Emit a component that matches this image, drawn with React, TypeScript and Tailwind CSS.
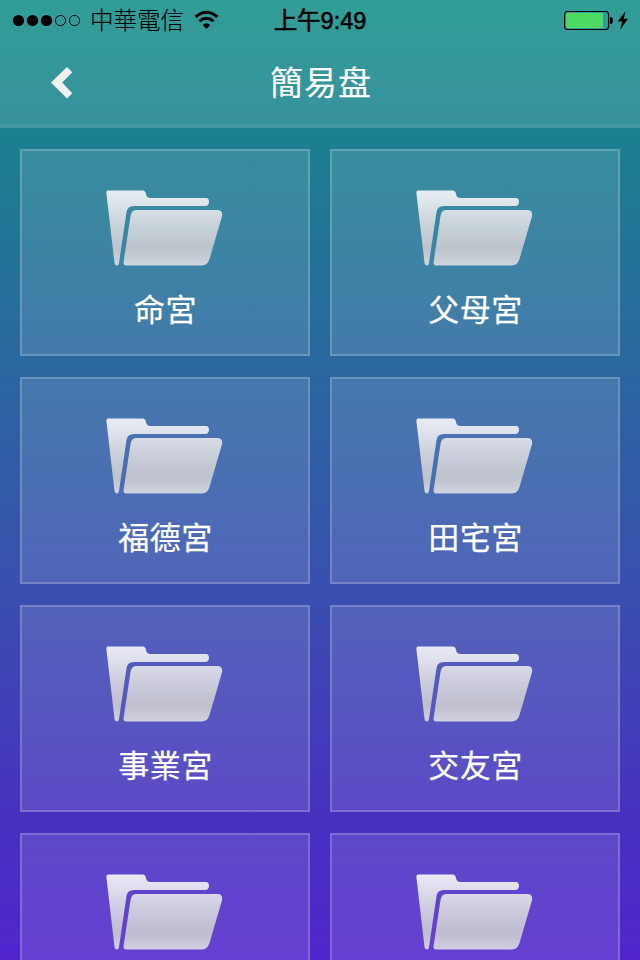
type Palace = {
    id: number;
    name?: string;
};

const palaces: Palace[] = [
    { id: 1, name: '命宮' },
    { id: 2, name: '父母宮' },
    { id: 3, name: '福德宮' },
    { id: 4, name: '田宅宮' },
    { id: 5, name: '事業宮' },
    { id: 6, name: '交友宮' },
    { id: 7 },
    { id: 8 },
];

export default function App() {
    return (
        <div className="flex h-[960px] w-[640px] flex-col overflow-hidden bg-[linear-gradient(180deg,#118f87_0px,#1b808f_130px,#2a67a0_365px,#3a4eb0_600px,#4730bf_820px,#5025cc_960px)] font-['Liberation_Sans','Noto_Sans_CJK_TC',sans-serif]">
            <header className="h-32 shrink-0 border-b-4 border-white/6 bg-white/13">
                <StatusBar />
                <NavBar title="簡易盘" />
            </header>

            <main className="grid grid-cols-2 gap-x-5 gap-y-[21px] px-5 pt-[21px]">
                {palaces.map((palace) => (
                    <PalaceCard key={palace.id} palace={palace} />
                ))}
            </main>
        </div>
    );
}

function StatusBar() {
    return (
        <div className="grid h-10 grid-cols-[1fr_auto_1fr] items-center text-black">
            <div className="flex items-center pl-3">
                <svg width="70" height="14" viewBox="0 0 70 14">
                    <circle cx="6.5" cy="7.5" r="5.6" />
                    <circle cx="20.5" cy="7.5" r="5.6" />
                    <circle cx="34.5" cy="7.5" r="5.6" />
                    <circle cx="48.5" cy="7.5" r="5.1" fill="none" stroke="#000" />
                    <circle cx="62.5" cy="7.5" r="5.1" fill="none" stroke="#000" />
                </svg>
                <span className="ml-[8px] pt-[2px] text-[23.5px] leading-[38px] font-light [-webkit-text-stroke:0.15px_black]">
                    中華電信
                </span>
                <svg className="ml-[10px]" width="26" height="20" viewBox="0 0 26 20">
                    <path d="M1.5 7Q12.5 -2.5 23.5 7" fill="none" stroke="#000" strokeWidth="3" />
                    <path d="M5.4 11.2Q12.5 5.2 19.6 11.2" fill="none" stroke="#000" strokeWidth="2.8" />
                    <path d="M8.7 14.9Q12.5 11.7 16.3 14.9L12.5 19Z" />
                </svg>
            </div>

            <span className="pt-[2px] text-[23.5px] leading-[38px] [-webkit-text-stroke:0.6px_black]">
                上午9:49
            </span>

            <div className="flex items-center justify-end pr-[10px]">
                <svg width="66" height="22" viewBox="0 0 66 22">
                    <rect x="0.6" y="2.5" width="44" height="18" rx="3" fill="none" stroke="#000" strokeWidth="1.2" />
                    <rect x="2" y="4" width="37" height="15" rx="1" fill="#4cd964" />
                    <path d="M46 8H47.2Q49 9 49 11.5T47.2 15H46Z" />
                    <path d="M61.5 2L53.7 12.5H58.2L56 21L64 9.7H59.8Z" />
                </svg>
            </div>
        </div>
    );
}

function NavBar({ title }: { title: string }) {
    return (
        <div className="grid h-[84px] grid-cols-[1fr_auto_1fr] items-center">
            <button type="button" className="ml-[50px] w-6">
                <svg width="24" height="34" viewBox="0 0 24 34">
                    <path d="M17 2L22.3 7.2L12.2 17.6L22.3 28.2L17 33.4L1 17.6Z" fill="#f0f0f0" />
                </svg>
            </button>
            <h1 className="pt-[3px] pl-[2px] text-[33px] leading-[81px] tracking-[1px] text-white [-webkit-text-stroke:0.15px_white]">
                {title}
            </h1>
        </div>
    );
}

function PalaceCard({ palace }: { palace: Palace }) {
    return (
        <div className="flex h-[207px] flex-col items-center border-2 border-white/20 bg-white/12 pt-[38px]">
            <FolderIcon />
            {palace.name && (
                <span className="mt-6 pl-[1px] text-[31px] leading-10 tracking-[0.5px] text-white [-webkit-text-stroke:0.25px_white]">
                    {palace.name}
                </span>
            )}
        </div>
    );
}

function FolderIcon() {
    return (
        <svg className="mr-[2px] shrink-0" width="118" height="78" viewBox="0 0 118 78">
            <defs>
                <linearGradient id="folder" gradientUnits="userSpaceOnUse" x1="0" y1="0" x2="0" y2="77">
                    <stop offset="0" stopColor="#f8f8fc" stopOpacity=".92" />
                    <stop offset=".25" stopColor="#ececf0" stopOpacity=".89" />
                    <stop offset=".5" stopColor="#dcdce0" stopOpacity=".87" />
                    <stop offset=".78" stopColor="#cdcdd0" stopOpacity=".88" />
                    <stop offset="1" stopColor="#e2e2e4" stopOpacity=".88" />
                </linearGradient>
            </defs>
            <g fill="url(#folder)">
                <path d="M3 1.5H37.5Q40.5 1.5 41 5Q41.5 9 45.5 9H101Q104 9.3 104 12.7T101 17H29Q22.3 17 21.5 23L14 74Q13.5 76.5 12 76.5Q10 76.5 9.5 74L1.5 5Q1 1.5 3 1.5Z" />
                <path d="M31 21H112Q118.5 21 116.8 28L104.5 70Q102.5 76.5 97 76.5H21Q18.2 76.5 18.6 73L25.5 27Q26.5 21 31 21Z" />
            </g>
        </svg>
    );
}
